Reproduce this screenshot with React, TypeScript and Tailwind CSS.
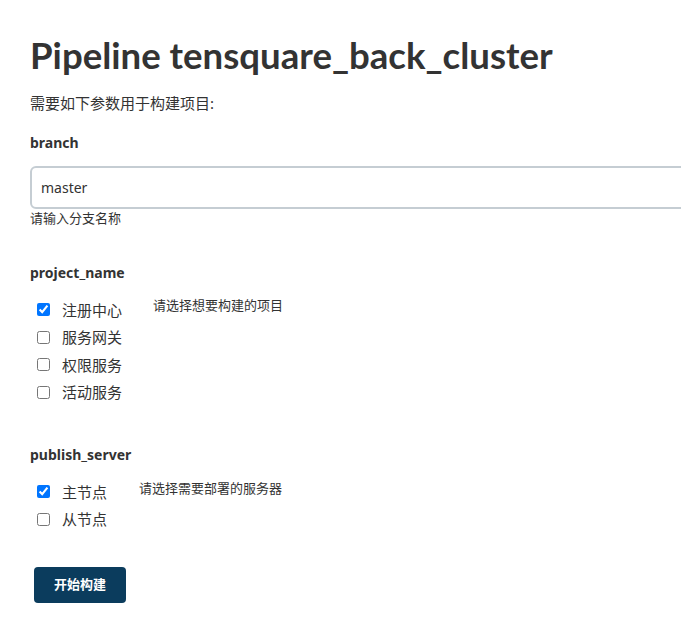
import React from "react";

const font = '"Noto Sans", "Noto Sans CJK SC", sans-serif';

function CheckRow({ label, checked }: { label: string; checked?: boolean }) {
  return (
    <label className="flex h-[27.5px] items-center">
      <input
        type="checkbox"
        defaultChecked={checked}
        className="m-0 ml-[7px] h-[13px] w-[13px]"
      />
      <span className="ml-[12px] text-[15px] leading-[20px] text-[#333]">{label}</span>
    </label>
  );
}

export default function App() {
  return (
    <div className="min-h-[623px] w-full overflow-hidden bg-white" style={{ fontFamily: font }}>
      <div className="pl-[30px] pt-[33px]">
        <h1 className="font-['Lato',sans-serif] text-[36.6px] font-bold leading-[44px] text-[#333]">Pipeline tensquare_back_cluster</h1>
        <p className="mt-[16px] text-[15px] leading-[20px] text-[#333]">需要如下参数用于构建项目:</p>

        <div className="mt-[20px] text-[14px] font-bold leading-[20px] text-[#333]">branch</div>
        <input
          type="text"
          defaultValue="master"
          className="mt-[13px] block h-[43px] w-[760px] rounded-[6px] border-2 border-[#c5cdd3] pl-[9px] text-[14px] text-[#333] outline-none"
        />
        <div className="text-[13px] leading-[18px] text-[#333]">请输入分支名称</div>

        <div className="mt-[36px] text-[14px] font-bold leading-[20px] text-[#333]">project_name</div>
        <div className="mt-[13px] flex items-start">
          <div className="flex flex-col">
            <CheckRow label="注册中心" checked />
            <CheckRow label="服务网关" />
            <CheckRow label="权限服务" />
            <CheckRow label="活动服务" />
          </div>
          <div className="ml-[31px] text-[13px] leading-[18px] text-[#333]">请选择想要构建的项目</div>
        </div>

        <div className="mt-[39px] text-[14px] font-bold leading-[20px] text-[#333]">publish_server</div>
        <div className="mt-[13px] flex items-start">
          <div className="flex flex-col">
            <CheckRow label="主节点" checked />
            <CheckRow label="从节点" />
          </div>
          <div className="ml-[32px] mt-px text-[13px] leading-[18px] text-[#333]">请选择需要部署的服务器</div>
        </div>

        <button className="ml-[4px] mt-[34px] flex h-[36px] w-[92px] items-center justify-center rounded-[4px] bg-[#0b3c5d] text-[13px] font-bold text-white">
          开始构建
        </button>
      </div>
    </div>
  );
}
